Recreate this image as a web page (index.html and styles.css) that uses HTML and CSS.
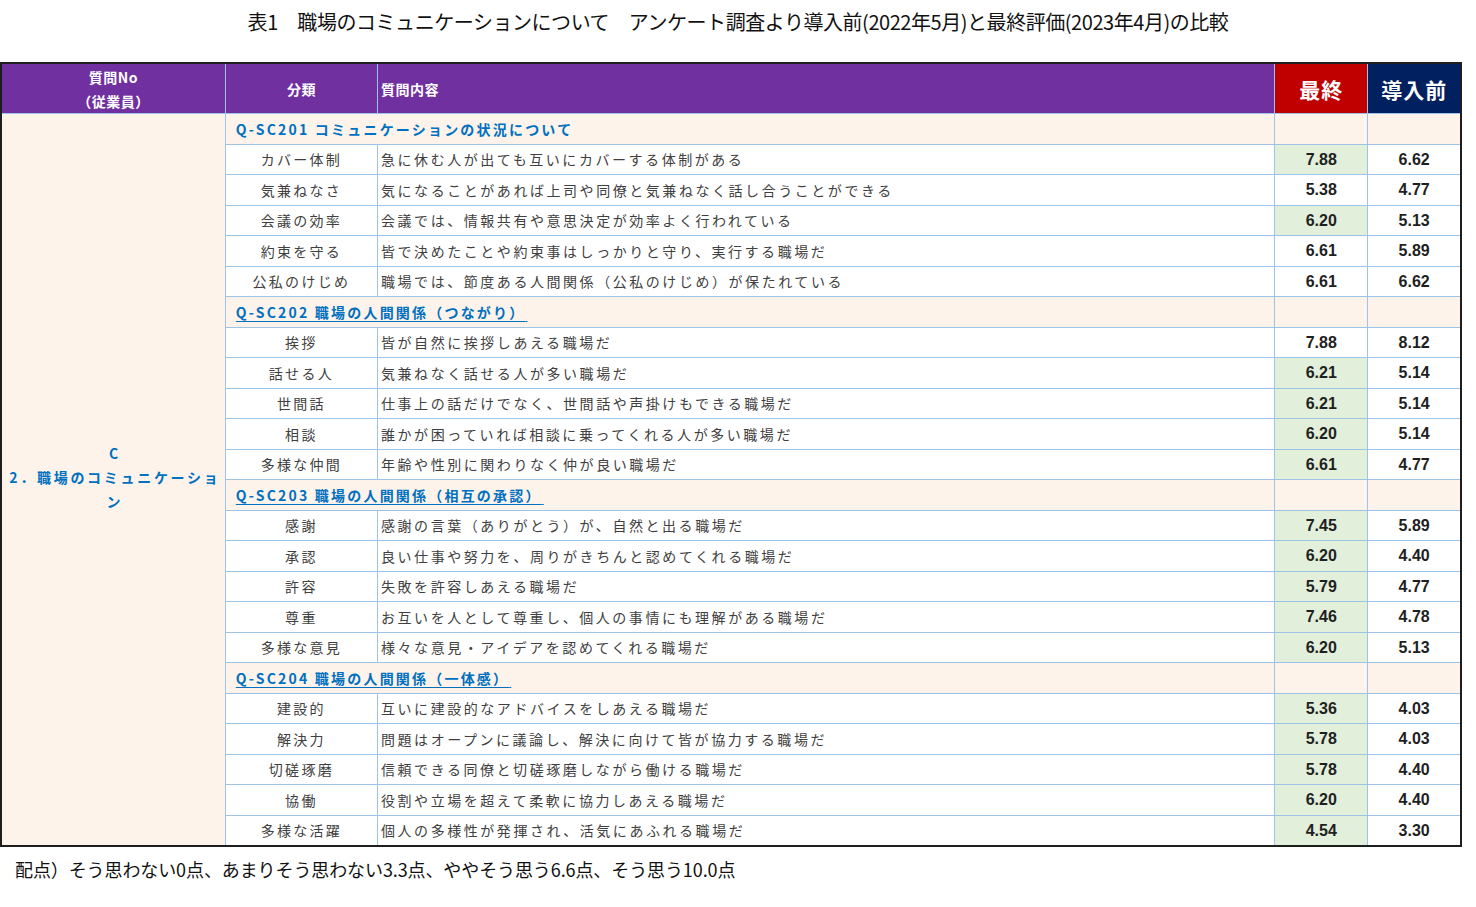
FILE: index.html
```html
<!DOCTYPE html>
<html lang="ja">
<head>
<meta charset="utf-8">
<title>表1</title>
<link rel="stylesheet" href="styles.css">
</head>
<body>
<h1 class="title">表1　職場のコミュニケーションについて　アンケート調査より導入前(2022年5月)と最終評価(2023年4月)の比較</h1>
<table class="tbl">
<colgroup>
<col class="c1"><col class="c2"><col class="c3"><col class="c4"><col class="c5">
</colgroup>
<thead>
<tr class="head">
<th class="h-no">質問No<br>（従業員）</th>
<th class="h-cat">分類</th>
<th class="h-q">質問内容</th>
<th class="h-final">最終</th>
<th class="h-pre">導入前</th>
</tr>
</thead>
<tbody>
<tr class="sec">
<td class="group" rowspan="24">C<br>2．職場のコミュニケーショ<br>ン</td>
<td colspan="2" class="sec-title">Q-SC201 コミュニケーションの状況について</td><td></td><td></td>
</tr>
<tr><td class="cat">カバー体制</td><td class="q">急に休む人が出ても互いにカバーする体制がある</td><td class="num hi">7.88</td><td class="num">6.62</td></tr>
<tr><td class="cat">気兼ねなさ</td><td class="q">気になることがあれば上司や同僚と気兼ねなく話し合うことができる</td><td class="num">5.38</td><td class="num">4.77</td></tr>
<tr><td class="cat">会議の効率</td><td class="q">会議では、情報共有や意思決定が効率よく行われている</td><td class="num hi">6.20</td><td class="num">5.13</td></tr>
<tr><td class="cat">約束を守る</td><td class="q">皆で決めたことや約束事はしっかりと守り、実行する職場だ</td><td class="num">6.61</td><td class="num">5.89</td></tr>
<tr><td class="cat">公私のけじめ</td><td class="q">職場では、節度ある人間関係（公私のけじめ）が保たれている</td><td class="num">6.61</td><td class="num">6.62</td></tr>
<tr class="sec"><td colspan="2" class="sec-title"><span class="ul">Q-SC202 職場の人間関係（つながり）</span></td><td></td><td></td></tr>
<tr><td class="cat">挨拶</td><td class="q">皆が自然に挨拶しあえる職場だ</td><td class="num">7.88</td><td class="num">8.12</td></tr>
<tr><td class="cat">話せる人</td><td class="q">気兼ねなく話せる人が多い職場だ</td><td class="num hi">6.21</td><td class="num">5.14</td></tr>
<tr><td class="cat">世間話</td><td class="q">仕事上の話だけでなく、世間話や声掛けもできる職場だ</td><td class="num hi">6.21</td><td class="num">5.14</td></tr>
<tr><td class="cat">相談</td><td class="q">誰かが困っていれば相談に乗ってくれる人が多い職場だ</td><td class="num hi">6.20</td><td class="num">5.14</td></tr>
<tr><td class="cat">多様な仲間</td><td class="q">年齢や性別に関わりなく仲が良い職場だ</td><td class="num hi">6.61</td><td class="num">4.77</td></tr>
<tr class="sec"><td colspan="2" class="sec-title"><span class="ul">Q-SC203 職場の人間関係（相互の承認）</span></td><td></td><td></td></tr>
<tr><td class="cat">感謝</td><td class="q">感謝の言葉（ありがとう）が、自然と出る職場だ</td><td class="num hi">7.45</td><td class="num">5.89</td></tr>
<tr><td class="cat">承認</td><td class="q">良い仕事や努力を、周りがきちんと認めてくれる職場だ</td><td class="num hi">6.20</td><td class="num">4.40</td></tr>
<tr><td class="cat">許容</td><td class="q">失敗を許容しあえる職場だ</td><td class="num hi">5.79</td><td class="num">4.77</td></tr>
<tr><td class="cat">尊重</td><td class="q">お互いを人として尊重し、個人の事情にも理解がある職場だ</td><td class="num hi">7.46</td><td class="num">4.78</td></tr>
<tr><td class="cat">多様な意見</td><td class="q">様々な意見・アイデアを認めてくれる職場だ</td><td class="num hi">6.20</td><td class="num">5.13</td></tr>
<tr class="sec"><td colspan="2" class="sec-title"><span class="ul">Q-SC204 職場の人間関係（一体感）</span></td><td></td><td></td></tr>
<tr><td class="cat">建設的</td><td class="q">互いに建設的なアドバイスをしあえる職場だ</td><td class="num hi">5.36</td><td class="num">4.03</td></tr>
<tr><td class="cat">解決力</td><td class="q">問題はオープンに議論し、解決に向けて皆が協力する職場だ</td><td class="num hi">5.78</td><td class="num">4.03</td></tr>
<tr><td class="cat">切磋琢磨</td><td class="q">信頼できる同僚と切磋琢磨しながら働ける職場だ</td><td class="num hi">5.78</td><td class="num">4.40</td></tr>
<tr><td class="cat">協働</td><td class="q">役割や立場を超えて柔軟に協力しあえる職場だ</td><td class="num hi">6.20</td><td class="num">4.40</td></tr>
<tr><td class="cat">多様な活躍</td><td class="q">個人の多様性が発揮され、活気にあふれる職場だ</td><td class="num hi">4.54</td><td class="num">3.30</td></tr>
</tbody>
</table>
<p class="note">配点）そう思わない0点、あまりそう思わない3.3点、ややそう思う6.6点、そう思う10.0点</p>
</body>
</html>
```

FILE: styles.css
```css
html, body {
  margin: 0;
  padding: 0;
  background: #ffffff;
  font-family: "Noto Sans CJK JP", "Noto Sans", sans-serif;
}

.title {
  margin: 0;
  height: 62px;
  box-sizing: border-box;
  padding-top: 8px;
  text-align: center;
  font-size: 20px;
  font-weight: normal;
  line-height: 28px;
  color: #111;
  letter-spacing: -0.45px;
}

.tbl {
  border-collapse: collapse;
  table-layout: fixed;
  width: 1462px;
  border: 2px solid #1e1e1e;
}

.c1 { width: 224px; }
.c2 { width: 152px; }
.c3 { width: 896px; }
.c4 { width: 93px; }
.c5 { width: 93px; }

.tbl th,
.tbl td {
  border: 1px solid #9dc3e6;
  padding: 0;
  overflow: hidden;
  white-space: nowrap;
}

.head th {
  height: 49px;
  color: #ffffff;
  font-weight: bold;
  font-size: 14px;
  line-height: 24px;
  background: #7030a0;
  letter-spacing: 0.5px;
}

.h-no { text-align: center; }
.h-cat { text-align: center; }
.h-q { text-align: left; padding-left: 3px !important; }

.head .h-final,
.head .h-pre {
  font-size: 21px;
  letter-spacing: 1px;
  text-align: center;
}

.head .h-final { background: #c00000; }
.head .h-pre { background: #002060; }

.tbl tbody tr {
  height: 30.5px;
}

.sec td {
  background: #fdf3ea;
}

.group {
  background: #fdf3ea;
  color: #0070c0;
  font-weight: bold;
  font-size: 14px;
  line-height: 24px;
  letter-spacing: 2.7px;
  text-align: center;
  vertical-align: middle;
  white-space: normal;
  padding-left: 3px !important;
  padding-bottom: 4px !important;
}

.sec-title {
  color: #0070c0;
  font-weight: bold;
  font-size: 14px;
  letter-spacing: 2.2px;
  padding-left: 10px !important;
  text-align: left;
}

.ul {
  text-decoration: underline;
  text-underline-offset: 3px;
}

.ul::after {
  content: "\00a0";
  letter-spacing: 0;
  font-size: 9px;
}

.cat {
  text-align: center;
  color: #404040;
  font-size: 14px;
  letter-spacing: 2.3px;
}

.q {
  text-align: left;
  color: #404040;
  font-size: 14px;
  letter-spacing: 2.55px;
  padding-left: 3px !important;
}

.num {
  text-align: center;
  font-family: "Liberation Sans", Arial, sans-serif;
  font-weight: bold;
  font-size: 16px;
  color: #1f1f1f;
  padding-top: 1px !important;
}

.num.hi {
  background: #e2efda;
}

.note {
  margin: 9px 0 0 15px;
  font-size: 18px;
  line-height: 26px;
  color: #111;
  letter-spacing: -0.1px;
}
```
